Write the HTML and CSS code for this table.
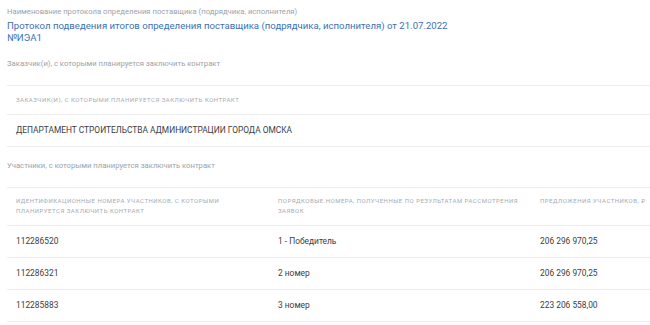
FILE: index.html
```html
<!DOCTYPE html>
<html lang="ru">
<head>
<meta charset="utf-8">
<link rel="stylesheet" href="styles.css">
</head>
<body>
<div class="page">
  <div class="label">Наименование протокола определения поставщика (подрядчика, исполнителя)</div>
  <div class="title">Протокол подведения итогов определения поставщика (подрядчика, исполнителя) от 21.07.2022 №ИЭА1</div>

  <div class="label section-label">Заказчик(и), с которыми планируется заключить контракт</div>
  <table class="grid customers">
    <thead>
      <tr><th>Заказчик(и), с которыми планируется заключить контракт</th></tr>
    </thead>
    <tbody>
      <tr><td>ДЕПАРТАМЕНТ СТРОИТЕЛЬСТВА АДМИНИСТРАЦИИ ГОРОДА ОМСКА</td></tr>
    </tbody>
  </table>

  <div class="label section-label second">Участники, с которыми планируется заключить контракт</div>
  <table class="grid participants">
    <colgroup>
      <col class="c1"><col class="c2"><col class="c3">
    </colgroup>
    <thead>
      <tr>
        <th>Идентификационные номера участников, с которыми планируется заключить контракт</th>
        <th>Порядковые номера, полученные по результатам рассмотрения заявок</th>
        <th>Предложения участников, ₽</th>
      </tr>
    </thead>
    <tbody>
      <tr><td>112286520</td><td>1 - Победитель</td><td>206 296 970,25</td></tr>
      <tr><td>112286321</td><td>2 номер</td><td>206 296 970,25</td></tr>
      <tr><td>112285883</td><td>3 номер</td><td>223 206 558,00</td></tr>
    </tbody>
  </table>
</div>
</body>
</html>
```

FILE: styles.css
```css
html, body {
  margin: 0;
  padding: 0;
  background: #ffffff;
}
body {
  font-family: Roboto, "Noto Sans", sans-serif;
  overflow: hidden;
}
.page {
  padding: 6px 0 0 7px;
}
.label {
  font-size: 7.7px;
  line-height: 12px;
  color: #9ca1a9;
}
.title {
  margin-top: 2px;
  font-size: 9.6px;
  line-height: 12px;
  color: #3d70b5;
  width: 456px;
}
.section-label {
  margin-top: 14px;
}
.section-label.second {
  margin-top: 13px;
}
.grid {
  border-collapse: collapse;
  width: 643px;
  margin-top: 15px;
  table-layout: fixed;
}
.grid th {
  text-align: left;
  font-weight: 400;
  font-size: 6px;
  letter-spacing: 0.5px;
  text-transform: uppercase;
  color: #a6abb2;
  line-height: 10px;
  padding: 9px 4px 9px 9px;
  border-top: 1px solid #ececec;
  border-bottom: 1px solid #ececec;
  vertical-align: top;
}
.grid td {
  font-size: 8.4px;
  color: #3a3d42;
  padding: 10px 9px;
  line-height: 11px;
  border-bottom: 1px solid #ececec;
  white-space: nowrap;
}
.participants th {
  padding-top: 8px;
}
.participants th:last-child {
  padding-right: 0;
}
.c1, .c2 { width: 262px; }
```
